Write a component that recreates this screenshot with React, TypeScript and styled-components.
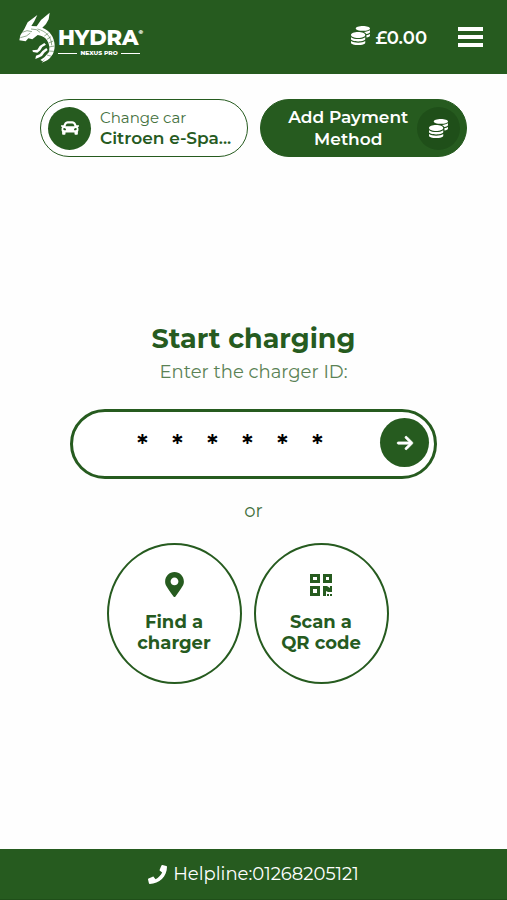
import React, { useRef, useState } from "react";
import styled, { createGlobalStyle } from "styled-components";
import { FaCar, FaCoins, FaMapMarkerAlt, FaPhone } from "react-icons/fa";
import { FaArrowRight } from "react-icons/fa6";

const green = "#265b1f";
const darkGreen = "#1f4f19";

const GlobalStyle = createGlobalStyle`
  *, *::before, *::after { box-sizing: border-box; }
  body { margin: 0; background: #fefefe; color: ${green}; }
  body, button, input { font-family: Montserrat, Inter, sans-serif; }
  button { cursor: pointer; }
  a { color: inherit; text-decoration: none; }
`;

const Page = styled.div`
  min-height: 100vh;
  display: flex;
  flex-direction: column;
`;

const Header = styled.header`
  height: 74px;
  padding: 0 24px 0 17px;
  display: flex;
  align-items: center;
  background: ${green};
  color: #fff;
`;

const Brand = styled.a`
  display: flex;
  align-items: center;
  gap: 1px;
  margin-right: auto;
`;

const Wordmark = styled.span`
  display: flex;
  flex-direction: column;
  padding-top: 10px;
`;

const BrandName = styled.span`
  display: flex;
  font-size: 21px;
  font-weight: 800;
  line-height: 22px;
`;

const Registered = styled.sup`
  font-size: 6px;
  line-height: 10px;
`;

const BrandModel = styled.span`
  display: flex;
  align-items: center;
  gap: 3px;
  padding-right: 3px;
  font-size: 6px;
  font-weight: 800;
  line-height: 8px;
  white-space: nowrap;

  &::before,
  &::after {
    content: "";
    flex: 1;
    height: 1px;
    background: #fff;
  }
`;

const Balance = styled.span`
  display: flex;
  align-items: center;
  gap: 6px;
  margin-right: 31px;
  padding-top: 2px;
  font-size: 18px;
  font-weight: 600;

  svg { margin-bottom: 6px; }
`;

const MenuButton = styled.button`
  display: flex;
  padding: 0;
  border: 0;
  background: none;
  color: #fff;
`;

const Main = styled.main`
  flex: 1;
  display: flex;
  flex-direction: column;
  padding: 25px 40px 0;
`;

const QuickActions = styled.div`
  display: grid;
  grid-template-columns: 1fr 1fr;
  gap: 12px;
`;

const Pill = styled.button<{ $filled?: boolean }>`
  min-width: 0;
  height: 58px;
  display: flex;
  align-items: center;
  gap: ${(p) => (p.$filled ? 5 : 9)}px;
  padding: ${(p) => (p.$filled ? "0 6px 0 24px" : "0 14px 0 7px")};
  border: 1px solid ${green};
  border-radius: 29px;
  background: ${(p) => (p.$filled ? green : "#fff")};
  color: ${(p) => (p.$filled ? "#fff" : green)};
`;

const PillIcon = styled.span<{ $dark?: boolean }>`
  flex: none;
  width: 43px;
  height: 43px;
  display: grid;
  place-items: center;
  border-radius: 50%;
  background: ${(p) => (p.$dark ? darkGreen : green)};
  color: #fff;
`;

const CarText = styled.span`
  min-width: 0;
  display: flex;
  flex-direction: column;
  text-align: left;
  font-size: 15px;
  line-height: 21px;
`;

const CarLabel = styled.span`
  color: #44713e;
`;

const CarName = styled.strong`
  font-size: 17px;
  font-weight: 600;
  white-space: nowrap;
`;

const PaymentText = styled.span`
  flex: 1;
  font-size: 17px;
  font-weight: 600;
  line-height: 22px;
`;

const Charging = styled.section`
  flex: 1;
  display: flex;
  flex-direction: column;
  align-items: center;
  justify-content: center;
  padding-bottom: 2px;
`;

const Title = styled.h1`
  margin: 0;
  font-size: 27px;
  font-weight: 700;
  line-height: 36px;
`;

const Hint = styled.p`
  margin: 0;
  font-size: 18px;
  line-height: 30px;
  color: #5a8255;
`;

const CodeForm = styled.form`
  width: 86%;
  height: 70px;
  display: flex;
  align-items: center;
  justify-content: space-between;
  margin-top: 22px;
  padding: 0 5px 2px 52px;
  border: 3px solid ${green};
  border-radius: 35px;
  background: #fff;
`;

const Digits = styled.fieldset`
  display: flex;
  margin: 0;
  padding: 2px 0 0;
  border: 0;
`;

const Digit = styled.input`
  width: 35px;
  height: 36px;
  padding: 0;
  border: 0;
  outline: 0;
  background: none;
  text-align: center;
  font-size: 26px;
  font-weight: 600;
  color: #000;

  &::placeholder { color: #000; opacity: 1; }
`;

const SubmitButton = styled.button`
  width: 49px;
  height: 49px;
  display: grid;
  place-items: center;
  padding: 0;
  border: 0;
  border-radius: 50%;
  background: ${green};
  color: #fff;

  svg { stroke: currentColor; stroke-width: 20; }
`;

const Or = styled.p`
  margin: 20px 0;
  padding-top: 1px;
  font-size: 18px;
  line-height: 23px;
  color: #44713e;
`;

const Choices = styled.div`
  display: flex;
  gap: 12px;
  margin-right: 12px;
`;

const Choice = styled.button`
  width: 135px;
  height: 141px;
  display: flex;
  flex-direction: column;
  align-items: center;
  gap: 15px;
  padding: 27px 0 0;
  border: 2px solid ${green};
  border-radius: 50%;
  background: #fff;
  color: ${green};
  font-size: 18px;
  font-weight: 700;
  line-height: 21px;
`;

const Footer = styled.footer`
  height: 51px;
  display: flex;
  justify-content: center;
  align-items: center;
  border-bottom: 1px solid ${darkGreen};
  background: ${green};
  color: #fff;
  font-size: 18px;
`;

const Helpline = styled.a`
  display: flex;
  align-items: center;
  gap: 6px;
`;

const Dragon = () => (
  <svg width="40" height="52" viewBox="6 12 120 156" fill="none" aria-hidden="true">
    <g fill="#fff">
      <path d="M28 66 38 46 67 24 58 43 49 57 65 58 78 39 104 17 101 37 93 51 82 62C104 70 118 90 119 114c1 27-14 46-39 53 14-13 24-28 23-47-2-21-16-34-35-36L52 97 40 94l-8 9-19-3 3-15z" />
      <path d="m52 130 15-2 7-11 14-9 5 5-11 7-6 10-9 7-13-2z" />
      <path d="m63 146 11-4 8-10 12-9 4 6-10 8-7 10-11 5-9 4z" />
      <path d="m76 159 12-8 12-14 5 3-10 13-12 10z" />
    </g>
    <g stroke={green} strokeWidth="1.5">
      <path d="m22 76 14-5 15 3M16 92l18-5 12-9M48 66l16 2 11 8" />
      <path d="M67 66c25 5 43 24 43 49" />
      <path d="m88 87 12-8M96 97l12-8M101 108l14-6M102 120l16-3M101 132l16 1M96 144l14 4" />
    </g>
  </svg>
);

const MenuIcon = () => (
  <svg width="25" height="20" viewBox="0 0 25 20" fill="currentColor" aria-hidden="true">
    <path d="M0 0h25v4H0zM0 8h25v4H0zM0 16h25v4H0z" />
  </svg>
);

const QrIcon = () => (
  <svg width="25" height="25" viewBox="0 0 25 25" fill="currentColor" aria-hidden="true">
    <path fillRule="evenodd" d="M1 2h10v9H1zm3 3v3h4V5zM14 2h9v9h-9zm3 3v3h3V5zM1 14h10v10H1zm3 3v4h4v-4z" />
    <path d="M14 14h4l3 2v-2h2v6h-4l-2-1v5h-3zM18 22h2v2h-2zM21 22h2v2h-2z" />
  </svg>
);

const codeLength = 6;

export default function App() {
  const [code, setCode] = useState<string[]>(Array(codeLength).fill(""));
  const inputs = useRef<(HTMLInputElement | null)[]>([]);

  const update = (index: number, value: string) => {
    setCode((prev) => prev.map((c, i) => (i === index ? value : c)));
    if (value) inputs.current[index + 1]?.focus();
  };

  return (
    <Page>
      <GlobalStyle />
      <Header>
        <Brand href="#" aria-label="Hydra Nexus Pro">
          <Dragon />
          <Wordmark>
            <BrandName>HYDRA<Registered>®</Registered></BrandName>
            <BrandModel>NEXUS PRO</BrandModel>
          </Wordmark>
        </Brand>
        <Balance><FaCoins size={19} />£0.00</Balance>
        <MenuButton aria-label="Menu"><MenuIcon /></MenuButton>
      </Header>
      <Main>
        <QuickActions>
          <Pill>
            <PillIcon><FaCar size={18} /></PillIcon>
            <CarText><CarLabel>Change car</CarLabel><CarName>Citroen e-Spa...</CarName></CarText>
          </Pill>
          <Pill $filled>
            <PaymentText>Add Payment Method</PaymentText>
            <PillIcon $dark><FaCoins size={19} /></PillIcon>
          </Pill>
        </QuickActions>
        <Charging>
          <Title>Start charging</Title>
          <Hint id="code-hint">Enter the charger ID:</Hint>
          <CodeForm onSubmit={(e) => e.preventDefault()}>
            <Digits aria-labelledby="code-hint">
              {code.map((value, i) => (
                <Digit
                  key={i}
                  ref={(el) => { inputs.current[i] = el; }}
                  aria-label={`Character ${i + 1}`}
                  maxLength={1}
                  placeholder="*"
                  value={value}
                  onChange={(e) => update(i, e.target.value)}
                />
              ))}
            </Digits>
            <SubmitButton type="submit" aria-label="Continue"><FaArrowRight size={18} /></SubmitButton>
          </CodeForm>
          <Or>or</Or>
          <Choices>
            <Choice><FaMapMarkerAlt size={25} /><span>Find a<br />charger</span></Choice>
            <Choice><QrIcon /><span>Scan a<br />QR code</span></Choice>
          </Choices>
        </Charging>
      </Main>
      <Footer>
        <Helpline href="tel:01268205121"><FaPhone size={19} /><span>Helpline:01268205121</span></Helpline>
      </Footer>
    </Page>
  );
}
